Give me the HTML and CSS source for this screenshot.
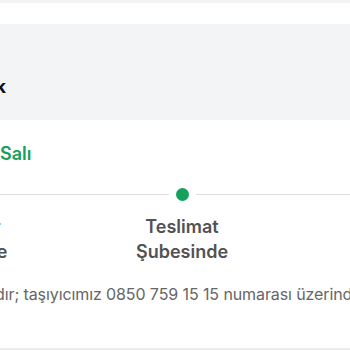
FILE: index.html
```html
<!DOCTYPE html>
<html lang="tr">
<head>
<meta charset="utf-8">
<title>Kargo Takip</title>
<link rel="stylesheet" href="styles.css">
</head>
<body>
<div class="page">
  <div class="topbar"></div>
  <section class="banner">
    <div class="banner-text"><span>Siparişiniz yarın kapınızda olacak</span></div>
  </section>
  <div class="date-row"><span class="clip"><span>Tahmini teslimat: 12 Mart</span></span><span class="date">Salı</span></div>
  <div class="track">
    <div class="step">
      <div class="step-line"><span class="seg"></span><span class="dot done"></span><span class="seg"></span></div>
      <div class="step-label">Transfer Merkezde</div>
    </div>
    <div class="step">
      <div class="step-line"><span class="seg"></span><span class="dot active"></span><span class="seg"></span></div>
      <div class="step-label">Teslimat Şubesinde</div>
    </div>
    <div class="step">
      <div class="step-line"><span class="seg"></span><span class="dot"></span><span class="seg"></span></div>
      <div class="step-label">Teslim Edildi</div>
    </div>
  </div>
  <p class="note"><span class="clip"><span>Paketiniz teslimat şubesinde teslim alınmaya hazır</span></span><span>dır; taşıyıcımız 0850 759 15 15 numarası üzerinden size ulaşacaktır.</span></p>
  <div class="bottombar"></div>
</div>
</body>
</html>
```
FILE: styles.css
```css
html, body {
  margin: 0;
  padding: 0;
  background: #ffffff;
}
body {
  width: 350px;
  height: 350px;
  overflow: hidden;
  font-family: Inter, "Noto Sans", sans-serif;
}
.page {
  width: 350px;
  height: 350px;
  overflow: hidden;
  display: flex;
  flex-direction: column;
}
.topbar {
  height: 3px;
  background: #f3f3f4;
  flex: none;
}
.banner {
  margin-top: 21px;
  height: 96px;
  background: #f3f4f6;
  flex: none;
  display: flex;
  box-sizing: border-box;
  padding-top: 51px;
}
.banner-text {
  width: 6px;
  display: flex;
  justify-content: flex-end;
  white-space: nowrap;
  font-size: 18px;
  line-height: 24px;
  font-weight: 700;
  color: #111111;
  height: 24px;
}
.clip {
  width: 0;
  display: flex;
  justify-content: flex-end;
  white-space: nowrap;
}
.date-row {
  margin-top: 22px;
  display: flex;
  white-space: nowrap;
  font-size: 18px;
  line-height: 24px;
  font-weight: 600;
  color: #17a05d;
  flex: none;
}
.track {
  margin-top: 22px;
  margin-left: -145px;
  display: grid;
  grid-template-columns: repeat(3, 218px);
  flex: none;
}
.step {
  display: flex;
  flex-direction: column;
  align-items: center;
}
.step-line {
  width: 100%;
  height: 13px;
  display: flex;
  align-items: center;
  gap: 7px;
}
.seg {
  flex: 1;
  height: 1px;
  background: #dedede;
}
.dot {
  width: 13px;
  height: 13px;
  border-radius: 50%;
  background: #dedede;
  flex: none;
}
.dot.done,
.dot.active {
  background: #17a05d;
}
.step-label {
  margin-top: 13px;
  max-width: 100px;
  text-align: center;
  font-size: 18px;
  line-height: 25px;
  font-weight: 600;
  color: #525252;
}
.note {
  margin: 18px 0 0 -5px;
  display: flex;
  white-space: nowrap;
  font-size: 16px;
  line-height: 24px;
  letter-spacing: -0.1px;
  color: #666666;
  flex: none;
}
.bottombar {
  margin-top: auto;
  height: 2px;
  background: #ececec;
  flex: none;
}
```
